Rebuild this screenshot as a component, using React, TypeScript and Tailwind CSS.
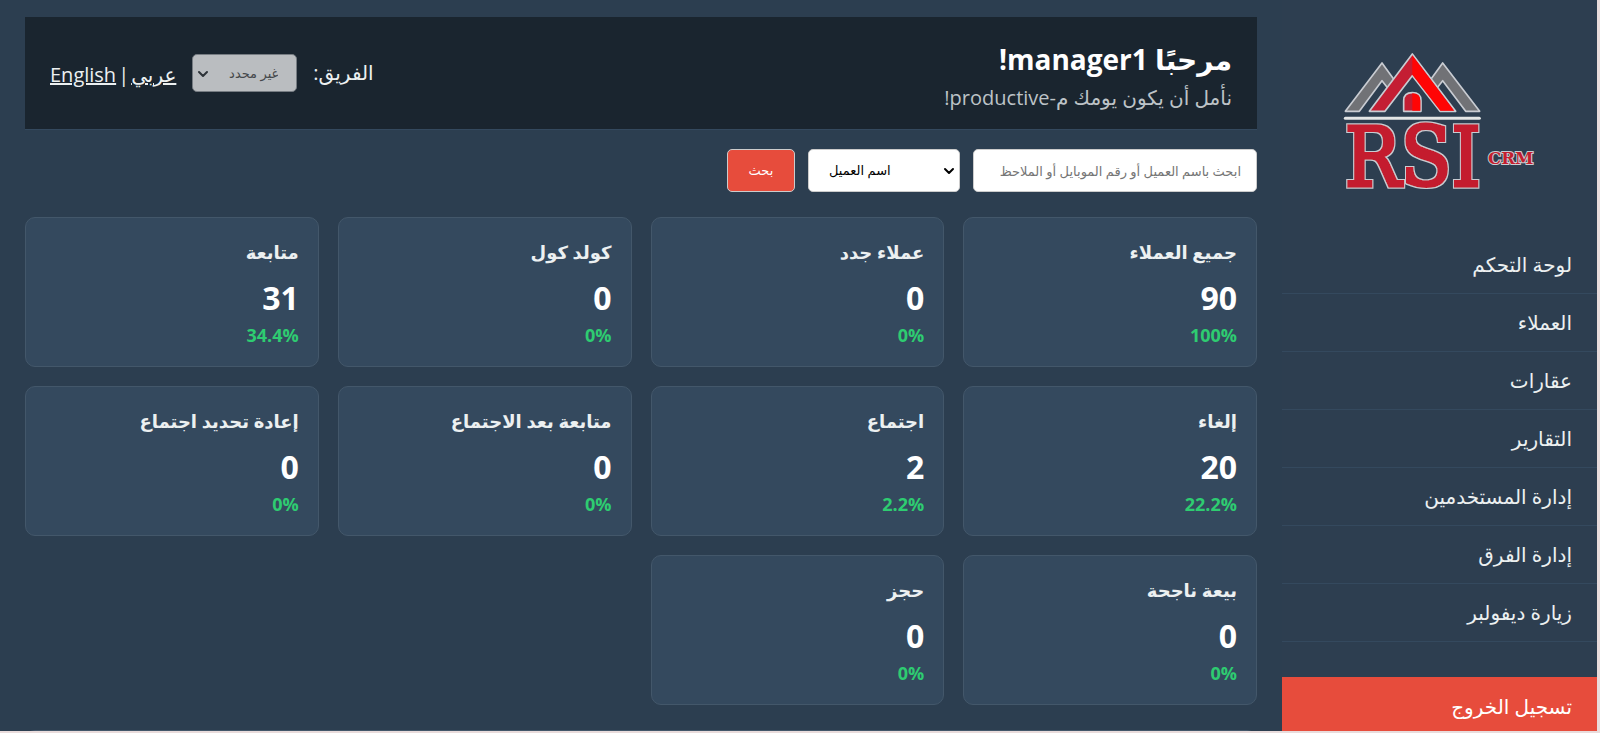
import { ChevronDown } from "lucide-react";

interface Stat {
  title: string;
  count: number;
  percent: string;
}

const stats: Stat[] = [
  { title: "جميع العملاء", count: 90, percent: "100%" },
  { title: "عملاء جدد", count: 0, percent: "0%" },
  { title: "كولد كول", count: 0, percent: "0%" },
  { title: "متابعة", count: 31, percent: "34.4%" },
  { title: "إلغاء", count: 20, percent: "22.2%" },
  { title: "اجتماع", count: 2, percent: "2.2%" },
  { title: "متابعة بعد الاجتماع", count: 0, percent: "0%" },
  { title: "إعادة تحديد اجتماع", count: 0, percent: "0%" },
  { title: "بيعة ناجحة", count: 0, percent: "0%" },
  { title: "حجز", count: 0, percent: "0%" },
];

const links = [
  "لوحة التحكم",
  "العملاء",
  "عقارات",
  "التقارير",
  "إدارة المستخدمين",
  "إدارة الفرق",
  "زيارة ديفولبر",
];

function Logo() {
  return (
    <svg
      className="w-[240px] h-[180px]"
      viewBox="0 0 720 540"
      role="img"
      aria-label="RSI CRM"
      direction="ltr"
    >
      <g stroke="#c9ccd2" strokeWidth={5} strokeLinejoin="round">
        <path fill="#717276" d="M76 244 L186 99 L236 168 L206 178 L186 152 L118 244 Z" />
        <path fill="#717276" d="M479 244 L368 99 L318 168 L348 178 L368 152 L437 244 Z" />
        <path fill="#c41e33" d="M148 244 L277 72 L407 244 L360 244 L277 137 L195 244 Z" />
        <path fill="#c41e33" d="M251 244 V212 Q251 188 277 188 Q303 188 303 212 V244 Z" />
      </g>
      <path fill="#ff0505" d="M277 76 L402 242 L361 242 L277 134 Z" />
      <path fill="#ff0505" d="M277 190 Q301 190 301 212 V242 H277 Z" />
      <path stroke="#e4e6e6" strokeWidth={9} strokeLinecap="round" d="M76 265 H478" />
      {/* light outline filter keeps a single text node for the heavy letters */}
      <filter id="outline" x="-10%" y="-10%" width="120%" height="120%">
        <feMorphology in="SourceAlpha" operator="dilate" radius="3" result="grown" />
        <feFlood floodColor="#c9ccd2" />
        <feComposite in2="grown" operator="in" />
        <feMerge>
          <feMergeNode />
          <feMergeNode in="SourceGraphic" />
        </feMerge>
      </filter>
      <text
        className="font-['DejaVu_Serif_Condensed','DejaVu_Serif',serif]"
        x={74}
        y={468}
        fontSize={248}
        fill="#c41e2f"
        stroke="#c41e2f"
        strokeWidth={10}
        filter="url(#outline)"
      >
        RSI
      </text>
      <text
        className="font-['DejaVu_Serif',serif] font-bold"
        x={572}
        y={401}
        fontSize={50}
        textAnchor="middle"
        fill="#c41e2f"
        stroke="#c9ccd2"
        strokeWidth={6}
        paintOrder="stroke"
      >
        CRM
      </text>
    </svg>
  );
}

function Sidebar() {
  return (
    <aside className="w-[315px] shrink-0 bg-[#2d3e50]">
      <div className="flex justify-center pt-[30px] pb-[26px]">
        <Logo />
      </div>
      <nav>
        <ul>
          {links.map((link) => (
            <li key={link} className="border-b border-[#34495e]">
              <a href="#" className="block px-[25px] h-[57px] leading-[58px] text-xl text-[#ecf0f1]">
                {link}
              </a>
            </li>
          ))}
        </ul>
        <a
          href="#"
          className="mt-[35px] block px-[25px] h-[60px] leading-[60px] text-xl text-white bg-[#e74c3c]"
        >
          تسجيل الخروج
        </a>
      </nav>
    </aside>
  );
}

function Header() {
  return (
    <header className="flex items-center justify-between px-[25px] h-[113px] bg-[#1a252f] border-b border-[#34495e]">
      <div className="pt-2">
        <h1 className="text-[28px] leading-[42px] font-bold text-white">مرحبًا manager1!</h1>
        <p className="text-xl leading-9 text-[#bdc3c7]">نأمل أن يكون يومك م-productive!</p>
      </div>
      <div className="flex items-center gap-4 text-xl text-[#ecf0f1]">
        <label htmlFor="team">الفريق:</label>
        <div className="relative">
          <select
            id="team"
            disabled
            className="appearance-none block w-[105px] h-[38px] pr-[18px] rounded-[5px] border border-[#767c82] bg-[#babdc0] text-[#45484b] text-[13px]"
          >
            <option>غير محدد</option>
          </select>
          <ChevronDown
            className="absolute left-[3px] top-[12px] w-4 h-4 text-[#2d3338]"
            strokeWidth={3}
          />
        </div>
        <div className="flex gap-[2px] pt-1">
          <a href="#" className="underline">
            عربي
          </a>
          <span>|</span>
          <a href="#" className="underline">
            English
          </a>
        </div>
      </div>
    </header>
  );
}

function SearchForm() {
  return (
    <form className="flex gap-[13px] mt-[19px]">
      <input
        type="text"
        aria-label="بحث"
        placeholder="ابحث باسم العميل أو رقم الموبايل أو الملاحظ"
        className="w-[284px] h-[43px] px-[15px] rounded-[5px] bg-white border border-[#ccc] placeholder:text-[#757575] text-[13px]"
      />
      <div className="relative" dir="ltr">
        <select
          aria-label="نوع البحث"
          className="appearance-none block w-[152px] h-[43px] px-5 rounded-[5px] bg-white border border-[#ccc] text-black text-[13px]"
        >
          <option>اسم العميل</option>
        </select>
        <ChevronDown className="absolute right-[3px] top-[14px] w-4 h-4 text-black" strokeWidth={3} />
      </div>
      <button
        type="button"
        className="w-[68px] h-[43px] rounded-[5px] bg-[#e74c3c] border border-[#ccc] text-white text-[13px]"
      >
        بحث
      </button>
    </form>
  );
}

function StatCard({ stat }: { stat: Stat }) {
  return (
    <div className="h-[150px] px-[19px] pt-[16px] rounded-[10px] bg-[#34495e] border border-[#43576a]">
      <h3 className="text-lg leading-9 font-bold text-[#ecf0f1]">{stat.title}</h3>
      <p className="mt-[7px] text-[32px] leading-[42px] font-bold text-white">{stat.count}</p>
      <p className="text-lg leading-8 font-bold text-[#2ecc71]" dir="ltr">
        <span className="block text-right">{stat.percent}</span>
      </p>
    </div>
  );
}

export default function App() {
  return (
    <div
      dir="rtl"
      className="h-screen overflow-hidden pr-[3px] pb-[2px] bg-[#e9dcdc] font-['Open_Sans','DejaVu_Sans',sans-serif]"
    >
      <div className="flex h-full overflow-hidden bg-[#2c3e50]">
        <Sidebar />
        <main className="flex-1 px-[25px] pt-[17px]">
          <Header />
          <SearchForm />
          <section className="grid grid-cols-4 gap-[19px] mt-[25px]">
            {stats.map((stat) => (
              <StatCard key={stat.title} stat={stat} />
            ))}
          </section>
          <section className="h-40 mt-[25px] rounded-[10px] bg-[#34495e] border border-[#43576a]" />
        </main>
      </div>
    </div>
  );
}
